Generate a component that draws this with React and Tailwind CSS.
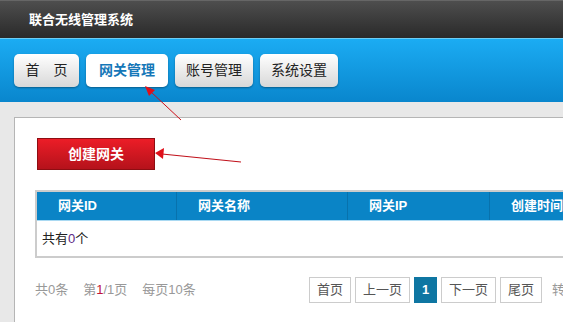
const font = { fontFamily: '"Liberation Sans", "Noto Sans CJK SC", sans-serif' }

const navItems = [
  { label: '首　页', width: 'w-[65px]' },
  { label: '网关管理', width: 'w-[82px]', active: true },
  { label: '账号管理', width: 'w-[78px]' },
  { label: '系统设置', width: 'w-[78px]' },
]

const columns = [
  { label: '网关ID', width: 'w-[140px]' },
  { label: '网关名称', width: 'w-[171px]' },
  { label: '网关IP', width: 'w-[142px]' },
  { label: '创建时间', width: 'w-[160px]' },
]

function PageButton({ children, width }) {
  return (
    <span className={`flex h-[26px] ${width} items-center justify-center border border-[#cccccc] bg-white text-[13px] text-[#555555]`}>
      {children}
    </span>
  )
}

export default function App() {
  return (
    <div className="relative flex h-[322px] w-[563px] flex-col overflow-hidden bg-[#e8e8e8]" style={font}>
      {/* Top bar */}
      <div className="flex h-[38px] shrink-0 items-center border-t border-[#666666] bg-gradient-to-b from-[#4e4e4e] to-[#2a2a2a] pl-[29px]">
        <span className="text-[13px] font-bold text-white">联合无线管理系统</span>
      </div>

      {/* Nav band */}
      <div className="flex h-[64px] shrink-0 gap-[7px] border-t border-[#6ccdf5] bg-gradient-to-b from-[#1bacf3] to-[#0986cd] pl-[14px] pt-[15px]">
        {navItems.map((item) => (
          <span
            key={item.label}
            className={`flex h-[33px] ${item.width} items-center justify-center rounded-[5px] shadow-[0_1px_2px_rgba(0,0,0,0.35)] ${
              item.active
                ? 'bg-white text-[14px] font-bold text-[#1577b8]'
                : 'bg-gradient-to-b from-white to-[#d8d8d8] text-[14px] text-[#222222]'
            }`}
          >
            {item.label}
          </span>
        ))}
      </div>

      {/* Content */}
      <div className="flex-1 pl-[14px] pt-[15px]">
        <div className="h-full border-l border-t border-[#b5b5b5] bg-white pt-[20px]">
          <div className="ml-[22px] flex h-[32px] w-[118px] items-center justify-center border border-[#8e0d12] bg-gradient-to-b from-[#ec1d27] to-[#b5121b] text-[14px] font-bold text-white">
            创建网关
          </div>

          {/* Table */}
          <div className="ml-[20px] mt-[20px] border-l-2 border-t-2 border-b-2 border-[#cccccc]">
            <div className="flex h-[28px] bg-[#0a84c6]">
              {columns.map((col, i) => (
                <div
                  key={col.label}
                  className={`flex shrink-0 items-center ${col.width} pl-[21px] text-[13px] font-bold text-white ${
                    i < columns.length - 1 ? 'border-r border-[#0872ad]' : ''
                  }`}
                >
                  {col.label}
                </div>
              ))}
            </div>
            <div className="flex h-[36px] items-center border-t border-[#a9d9f2] pl-[5px] text-[13px] text-[#222222]">
              共有<span className="text-[#5b2a86]">0</span>个
            </div>
          </div>

          {/* Pagination */}
          <div className="mt-[19px] flex items-center pl-[20px]">
            <div className="flex w-[274px] shrink-0 gap-[15px] text-[13px] text-[#999999]">
              <span>共0条</span>
              <span>
                第<span className="text-[#c0143c]">1</span>/1页
              </span>
              <span>每页10条</span>
            </div>
            <div className="flex shrink-0 items-center gap-[4px]">
              <PageButton width="w-[42px]">首页</PageButton>
              <PageButton width="w-[55px]">上一页</PageButton>
              <span className="flex h-[26px] w-[23px] items-center justify-center bg-[#0e76a2] text-[13px] font-bold text-white">
                1
              </span>
              <PageButton width="w-[55px]">下一页</PageButton>
              <PageButton width="w-[42px]">尾页</PageButton>
              <span className="ml-[6px] text-[13px] text-[#999999]">转到</span>
            </div>
          </div>
        </div>
      </div>

      {/* Annotation arrows */}
      <svg className="pointer-events-none absolute left-0 top-0" width="563" height="322">
        <line x1="181" y1="120" x2="150" y2="91" stroke="#d0101a" strokeWidth="1" />
        <polygon points="145,86 155,90 149,96" fill="#e0101a" />
        <line x1="241" y1="162" x2="162" y2="154" stroke="#c0101a" strokeWidth="1.2" />
        <polygon points="155,153 164,148 163,159" fill="#e0101a" />
      </svg>
    </div>
  )
}
